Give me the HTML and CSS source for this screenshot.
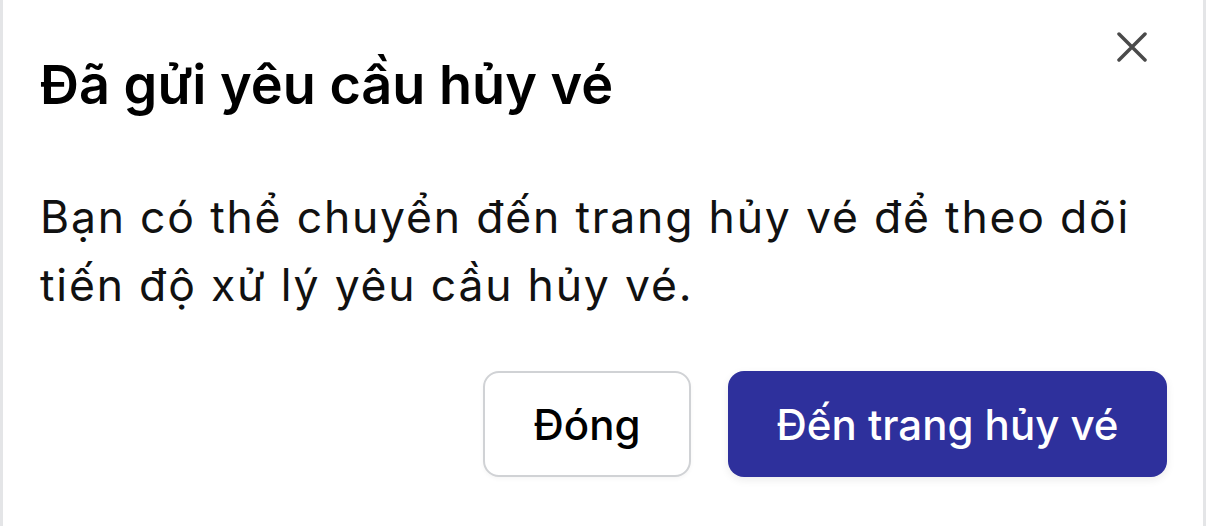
FILE: index.html
```html
<!DOCTYPE html>
<html lang="vi">
<head>
<meta charset="utf-8">
<link rel="stylesheet" href="styles.css">
</head>
<body>
<div class="dialog">
  <button class="close" aria-label="Đóng">
    <svg width="30" height="30" viewBox="0 0 30 30"><path d="M2 2 L28 28 M28 2 L2 28" stroke="#4a4a4a" stroke-width="3.5" stroke-linecap="round" fill="none"/></svg>
  </button>
  <h1 class="title">Đã gửi yêu cầu hủy vé</h1>
  <p class="text">Bạn có thể chuyển đến trang hủy vé để theo dõi tiến độ xử lý yêu cầu hủy vé.</p>
  <div class="actions">
    <button class="btn btn-secondary">Đóng</button>
    <button class="btn btn-primary">Đến trang hủy vé</button>
  </div>
</div>
</body>
</html>
```
FILE: styles.css
```css
html, body {
  margin: 0;
  padding: 0;
  background: #ffffff;
}
body {
  font-family: Inter, "Noto Sans", sans-serif;
  color: #000000;
}
.dialog {
  position: relative;
  box-sizing: border-box;
  width: 1206px;
  height: 526px;
  border-left: 3px solid #e4e5e7;
  border-right: 3px solid #e4e5e7;
  padding: 0 36px 0 37px;
  display: flex;
  flex-direction: column;
}
.close {
  position: absolute;
  top: 32px;
  right: 56px;
  width: 30px;
  height: 30px;
  padding: 0;
  border: 0;
  background: none;
  display: flex;
}
.title {
  margin: 55px 0 0 0;
  font-size: 54px;
  font-weight: 600;
  line-height: 60px;
}
.text {
  margin: 68px 0 0 0;
  font-size: 44.5px;
  font-weight: 400;
  line-height: 68px;
  letter-spacing: 1.8px;
  color: #111111;
}
.actions {
  margin-top: 52px;
  display: flex;
  justify-content: flex-end;
  gap: 37px;
}
.btn {
  font-family: Inter, "Noto Sans", sans-serif;
  font-size: 42px;
  font-weight: 500;
  height: 106px;
  border-radius: 16px;
  box-sizing: border-box;
  cursor: pointer;
}
.btn-secondary {
  width: 208px;
  background: #ffffff;
  color: #000000;
  border: 2px solid #d0d2d5;
  box-shadow: 0 2px 4px rgba(0,0,0,0.04);
}
.btn-primary {
  width: 439px;
  background: #2e309c;
  color: #ffffff;
  border: 0;
  box-shadow: 0 3px 8px rgba(0,0,0,0.08);
}
```
